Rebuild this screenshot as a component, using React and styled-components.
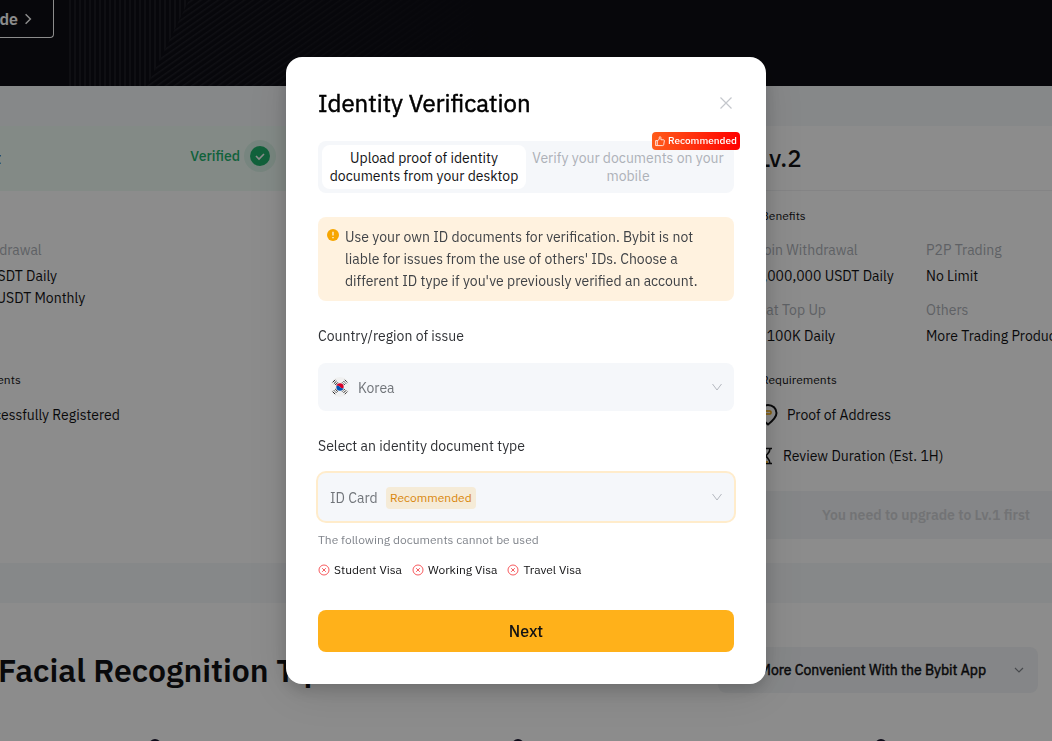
import React, {useState} from 'react';
import styled, {createGlobalStyle} from 'styled-components';

const GlobalStyle = createGlobalStyle`
  * {
    box-sizing: border-box;
  }
  body {
    margin: 0;
    overflow: hidden;
    color: #121214;
    font: 400 14px/22px 'IBM Plex Sans', Roboto, 'Liberation Sans', sans-serif;
  }
  button,
  select {
    font: inherit;
    color: inherit;
    border: 0;
    background: none;
    cursor: pointer;
  }
  p, h1, h2, h3, h4, ul, dl, dd {
    margin: 0;
    padding: 0;
  }
`;

const Page = styled.div`
  height: 100vh;
  overflow: hidden;
  background: white;
`;

const Band = styled.section`
  display: flex;
  justify-content: center;
  padding-right: 16px;
  overflow: hidden;
`;

const Container = styled.div`
  flex: none;
  width: 1200px;
`;

const Hero = styled(Band)`
  position: relative;
  height: 86px;
  background: #0e0e15;
`;

const HeroLines = styled.svg`
  position: absolute;
  top: 0;
  left: 69px;
`;

const GuideButton = styled.button`
  display: flex;
  align-items: center;
  justify-content: flex-end;
  gap: 4px;
  width: 136px;
  height: 38px;
  padding: 0 19px 0 0;
  border: 1px solid white;
  border-top: 0;
  border-radius: 0 0 4px 4px;
  color: white;
  font-size: 16px;
  font-weight: 600;
`;

const LevelsBand = styled(Band)`
  padding-top: 40px;
  padding-bottom: 40px;
  background: #f5f7fa;
`;

const Cards = styled(Container)`
  display: grid;
  grid-template-columns: repeat(3, 1fr);
  gap: 24px;
  position: relative;
  box-shadow: 0 0 0 100vw white;
  clip-path: inset(0 -100vw);
  background: white;
`;

const CardHeader = styled.header`
  display: flex;
  align-items: center;
  justify-content: space-between;
  height: 65px;
  padding: ${props => (props.$verified ? '0 26px 4px 23px' : '0 24px')};
  background: ${props => (props.$verified ? '#effbf5' : 'white')};
  border-bottom: 1px solid ${props => (props.$verified ? '#effbf5' : '#f0f1f3')};
  border-radius: 0 0 8px 0;
  box-shadow: ${props => (props.$verified ? '-384px 0 0 #effbf5' : 'none')};
`;

const Level = styled.h2`
  font-size: 24px;
  font-weight: 500;
`;

const AccountLevel = styled.h2`
  padding-top: 4px;
  font-size: 16px;
  font-weight: 500;
`;

const VerifiedMark = styled.span`
  display: flex;
  align-items: center;
  gap: 4px;
  color: #20b26c;
  font-weight: 500;
`;

const CardBody = styled.div`
  padding: 16px 24px 24px;
`;

const CardCaption = styled.h3`
  padding-left: 3px;
  font-size: 12px;
  font-weight: 400;
  line-height: 18px;
`;

const Benefits = styled.dl`
  display: grid;
  grid-template-columns: 1fr 1fr;
  align-content: start;
  row-gap: 12px;
  min-height: 108px;
  margin: 14px -3px 24px;
  white-space: nowrap;

  dt {
    margin-bottom: 4px;
    color: #adb1b8;
  }
`;

const Requirements = styled.ul`
  display: flex;
  flex-direction: column;
  gap: 19px;
  margin: 15px 0 24px;
  list-style: none;

  li {
    display: flex;
    align-items: center;
    gap: 9px;
  }
`;

const UpgradeButton = styled.button`
  width: 100%;
  height: 48px;
  border-radius: 8px;
  background: #f3f5f7;
  color: #d0d2d6;
  font-weight: 600;
`;

const TipsBand = styled(Band)`
  padding-top: 44px;
`;

const Tips = styled(Container)`
  padding: 0 80px;
`;

const TipsHead = styled.div`
  display: flex;
  align-items: center;
  justify-content: space-between;
`;

const TipsTitle = styled.h2`
  font-size: 32px;
  font-weight: 600;
  line-height: 46px;
`;

const TopicButton = styled.button`
  display: flex;
  align-items: center;
  justify-content: flex-end;
  gap: 28px;
  width: 320px;
  height: 46px;
  padding: 0 14px;
  border-radius: 8px;
  background: #f3f5f7;
  -webkit-text-stroke: 0.5px;
`;

const TipIcons = styled.div`
  display: grid;
  grid-template-columns: repeat(3, 1fr);
  gap: 48px;
  justify-items: center;
  margin-top: 46px;
`;

const Overlay = styled.div`
  position: fixed;
  inset: 0;
  display: flex;
  align-items: center;
  justify-content: center;
  background: rgba(0, 0, 0, 0.45);
`;

const Dialog = styled.div`
  width: 480px;
  max-width: 100%;
  padding: 32px;
  border-radius: 16px;
  background: white;
  box-shadow: 0 6px 16px rgba(0, 0, 0, 0.16), 0 8px 48px rgba(0, 0, 0, 0.12);
`;

const DialogHead = styled.div`
  display: flex;
  align-items: center;
  justify-content: space-between;
  margin-bottom: 24px;
`;

const DialogTitle = styled.h1`
  font-size: 24px;
  font-weight: 400;
  line-height: 28px;
  color: #000;
  -webkit-text-stroke: 0.5px;
`;

const CloseButton = styled.button`
  display: flex;
  padding: 2px;
`;

const Tabs = styled.div`
  position: relative;
  display: grid;
  grid-template-columns: 1fr 1fr;
  padding: 4px;
  border-radius: 8px;
  background: #f5f7fa;
`;

const Tab = styled.button`
  height: 44px;
  padding: 0 4px;
  border-radius: 8px;
  line-height: 18px;
  background: ${props => (props.$active ? 'white' : 'transparent')};
  color: ${props => (props.$active ? '#121214' : '#adb1b8')};
`;

const HotBadge = styled.span`
  position: absolute;
  top: -9px;
  right: -6px;
  display: flex;
  align-items: center;
  gap: 3px;
  height: 18px;
  padding: 0 3px;
  border-radius: 4px;
  background: linear-gradient(90deg, #ff5c1a, #ff0000);
  color: white;
  font-size: 10px;
  font-weight: 500;
`;

const Notice = styled.div`
  display: flex;
  gap: 6px;
  margin-top: 24px;
  padding: 9px;
  border-radius: 8px;
  background: #fff2df;
  color: #404347;

  svg {
    flex: none;
    margin-top: 3px;
  }
`;

const Label = styled.label`
  display: block;
  margin: 24px 0 16px;
  color: #303236;
`;

const SelectBox = styled.div`
  position: relative;
  display: flex;
  align-items: center;
  height: 48px;
  border-radius: 8px;
  background: #f5f7fa;
  box-shadow: ${props => (props.$focused ? '0 0 0 2px #ffeccb' : 'none')};

  > svg {
    position: absolute;
    pointer-events: none;
  }
`;

const Select = styled.select`
  appearance: none;
  width: 100%;
  height: 100%;
  padding: 2px 40px 0 ${props => (props.$withFlag ? '40px' : '12px')};
  outline: none;
  color: #71757a;
`;

const TypeBadge = styled.span`
  position: absolute;
  top: 14px;
  left: 68px;
  padding: 0 4px;
  border-radius: 4px;
  background: #f5ebd7;
  color: #d9860b;
  font-size: 12px;
  pointer-events: none;
`;

const Hint = styled.p`
  margin-top: 10px;
  color: #81858c;
  font-size: 12px;
  line-height: 18px;
`;

const Rejected = styled.ul`
  display: flex;
  gap: 10px;
  margin-top: 12px;
  list-style: none;
  font-size: 12px;
  line-height: 18px;

  li {
    display: flex;
    align-items: center;
    gap: 4px;
  }
`;

const NextButton = styled.button`
  width: 100%;
  height: 42px;
  margin-top: 31px;
  border-radius: 8px;
  background: #ffb11a;
  font-size: 16px;
  font-weight: 500;
`;

const REJECTED_DOCUMENTS = ['Student Visa', 'Working Visa', 'Travel Visa'];

const LEVEL_TWO_BENEFITS = [
  ['Coin Withdrawal', '2,000,000 USDT Daily'],
  ['P2P Trading', 'No Limit'],
  ['Fiat Top Up', '$ 100K Daily'],
  ['Others', 'More Trading Products']
];

const Chevron = ({size = 10, color = '#b4b8bf', ...rest}) => (
  <svg width={size} height={size} viewBox="0 0 10 10" fill="none" stroke={color} {...rest}>
    <path d="M0.5 2 5 8 9.5 2" />
  </svg>
);

const FlatChevron = ({size = 10, color = '#81858c', ...rest}) => (
  <svg width={size} height={size} viewBox="0 0 10 10" fill="none" stroke={color} {...rest}>
    <path d="m1 3 4 4 4-4" strokeWidth="1.200" />
  </svg>
);

const CheckMark = () => (
  <svg width="32" height="32" viewBox="0 0 32 32" fill="none">
    <circle cx="16" cy="16" r="16" fill="#20b26c" opacity="0.1" />
    <circle cx="16" cy="16" r="10" fill="#20b26c" />
    <path d="m12 16 3 3 5-5" stroke="white" strokeWidth="1.6" />
  </svg>
);

const PinIcon = () => (
  <svg width="20" height="22" viewBox="0 0 20 22" fill="none" strokeWidth="2">
    <path d="M10 20.500C5 16.500 1.500 13 1.500 9a8.500 8 0 0 1 17 0c0 4-3.500 7.500-8.500 11.500Z" stroke="#121214" />
    <rect x="6" y="7" width="7" height="3" rx="1" stroke="#f7a600" strokeWidth="1.500" />
  </svg>
);

const HourglassIcon = () => (
  <svg width="16" height="18" viewBox="0 0 16 18" fill="none" strokeWidth="1.6">
    <path d="M0 1.500h14M0 16.500h14M2 1.500c0 4 2.500 5 4 7.500-1.500 2.500-4 3.500-4 7.500M12 1.500c0 4-2.500 5-4 7.500 1.500 2.500 4 3.500 4 7.500" stroke="#121214" />
    <path d="M5 15h5" stroke="#f7a600" />
  </svg>
);

const ThumbIcon = () => (
  <svg width="10" height="11" viewBox="0 0 11 12" fill="none" stroke="white" strokeWidth="0.9" strokeLinejoin="round">
    <path d="M0.700 5h1.800v5.500H0.700zM2.500 5.200 4.700 3.600V1.400C4.700.4 6.500.4 6.500 1.700v2.400h2.800c.7 0 1.100.5 1 1.200l-.7 4.200c-.1.600-.5 1-1.100 1H2.500" />
  </svg>
);

const WarningIcon = () => (
  <svg width="12" height="12" viewBox="0 0 12 12">
    <circle cx="6" cy="6" r="6" fill="#f7a600" />
    <path d="M6 2.800v3.800M6 7.900v1.300" stroke="white" strokeWidth="1.200" />
  </svg>
);

const KoreaFlag = props => (
  <svg width="20" height="20" viewBox="0 0 20 20" {...props}>
    <circle cx="10" cy="10" r="10" fill="#f0f0f0" />
    <path d="M6.300 10a3.700 3.700 0 0 1 7.400 0c0 1.800-2 2-3.700 0s-3.700-1.500-3.700 0Z" fill="#d80027" />
    <path d="M13.700 10a3.700 3.700 0 0 1-7.400 0c0-1.500 2-2 3.700 0s3.700 1.800 3.700 0Z" fill="#0052b4" />
    <g stroke="#111" strokeWidth="0.900">
      <path d="m2.600 5.400 2.600-2.600M3.900 6.700l2.600-2.600M5.200 8l2.600-2.600" />
      <path d="m14.800 2.800 2.600 2.600M13.500 4.100l2.600 2.600M12.200 5.400l2.600 2.600" strokeDasharray="1.500 0.600" />
      <path d="m2.600 14.600 2.600 2.600M5.200 12l2.600 2.600" />
      <path d="m3.900 13.300 2.600 2.600" strokeDasharray="1.500 0.600" />
      <path d="m14.800 17.200 2.600-2.600M12.200 14.600l2.600-2.600" strokeDasharray="1.500 0.600" />
      <path d="m13.500 15.900 2.600-2.600" />
    </g>
  </svg>
);

const RejectIcon = () => (
  <svg width="12" height="12" viewBox="0 0 12 12" fill="none" stroke="#f5484d">
    <circle cx="6" cy="6" r="5" strokeWidth="0.900" />
    <path d="m4.200 4.200 3.600 3.600M7.800 4.200 4.200 7.800" strokeWidth="0.900" />
  </svg>
);

function HeroPattern() {
  return (
    <HeroLines width="420" height="86" viewBox="0 0 420 86" aria-hidden="true">
      <defs>
        <pattern id="upright" width="5" height="10" patternUnits="userSpaceOnUse">
          <rect width="2" height="10" fill="#1c1c24" />
        </pattern>
        <pattern id="slanted" width="5" height="5" patternUnits="userSpaceOnUse" patternTransform="rotate(-35)">
          <rect width="5" height="1.500" fill="#202028" />
        </pattern>
        <linearGradient id="fade">
          <stop offset="0.250" stopColor="white" />
          <stop offset="1" stopColor="black" />
        </linearGradient>
        <mask id="fade-out">
          <rect width="420" height="86" fill="url(#fade)" />
        </mask>
      </defs>
      <path d="M0 0h120L78 86H0z" fill="url(#upright)" />
      <path d="M120 0h300v86H78z" fill="url(#slanted)" mask="url(#fade-out)" />
    </HeroLines>
  );
}

function LevelCards() {
  return (
    <LevelsBand>
      <Cards>
        <article>
          <CardHeader $verified>
            <AccountLevel>Account</AccountLevel>
            <VerifiedMark>
              Verified
              <CheckMark />
            </VerifiedMark>
          </CardHeader>
          <CardBody>
            <CardCaption>Benefits</CardCaption>
            <Benefits>
              <div>
                <dt>Coin Withdrawal</dt>
                <dd>20,000 USDT Daily</dd>
                <dd>100,000 USDT Monthly</dd>
              </div>
            </Benefits>
            <CardCaption>Requirements</CardCaption>
            <Requirements>
              <li>
                <PinIcon />
                Successfully Registered
              </li>
            </Requirements>
          </CardBody>
        </article>
        <article>
          <CardHeader />
        </article>
        <article>
          <CardHeader>
            <Level>Lv.2</Level>
          </CardHeader>
          <CardBody>
            <CardCaption>Benefits</CardCaption>
            <Benefits>
              {LEVEL_TWO_BENEFITS.map(([name, value]) => (
                <div key={name}>
                  <dt>{name}</dt>
                  <dd>{value}</dd>
                </div>
              ))}
            </Benefits>
            <CardCaption>Requirements</CardCaption>
            <Requirements>
              <li>
                <PinIcon />
                Proof of Address
              </li>
              <li>
                <HourglassIcon />
                Review Duration (Est. 1H)
              </li>
            </Requirements>
            <UpgradeButton disabled>You need to upgrade to Lv.1 first</UpgradeButton>
          </CardBody>
        </article>
      </Cards>
    </LevelsBand>
  );
}

function FacialTips() {
  return (
    <TipsBand>
      <Tips>
        <TipsHead>
          <TipsTitle>Facial Recognition Tips</TipsTitle>
          <TopicButton>
            More Convenient With the Bybit App
            <FlatChevron />
          </TopicButton>
        </TipsHead>
        <TipIcons>
          {[0, 1, 2].map(i => (
            <svg key={i} width="12" height="12" viewBox="0 0 12 12">
              <circle cx="6" cy="6" r="5" fill="none" stroke="#1b1730" strokeWidth="2" />
            </svg>
          ))}
        </TipIcons>
      </Tips>
    </TipsBand>
  );
}

function VerificationDialog() {
  const [tab, setTab] = useState('desktop');

  return (
    <Dialog role="dialog" aria-modal="true" aria-labelledby="dialog-title">
      <DialogHead>
        <DialogTitle id="dialog-title">Identity Verification</DialogTitle>
        <CloseButton aria-label="Close">
          <svg width="12" height="12" viewBox="0 0 12 12" stroke="#c4c7cc" strokeWidth="1.200">
            <path d="m0.500 0.500 11 11M11.500 0.500l-11 11" />
          </svg>
        </CloseButton>
      </DialogHead>
      <Tabs role="tablist">
        <Tab role="tab" $active={tab === 'desktop'} onClick={() => setTab('desktop')}>
          Upload proof of identity documents from your desktop
        </Tab>
        <Tab role="tab" $active={tab === 'mobile'} onClick={() => setTab('mobile')}>
          Verify your documents on your mobile
        </Tab>
        <HotBadge>
          <ThumbIcon />
          Recommended
        </HotBadge>
      </Tabs>
      <Notice>
        <WarningIcon />
        <p>
          Use your own ID documents for verification. Bybit is not liable for issues from the use
          of others' IDs. Choose a different ID type if you've previously verified an account.
        </p>
      </Notice>
      <Label htmlFor="country">Country/region of issue</Label>
      <SelectBox>
        <KoreaFlag style={{left: 12}} />
        <Select id="country" $withFlag>
          <option>Korea</option>
        </Select>
        <Chevron style={{right: 12}} />
      </SelectBox>
      <Label htmlFor="document-type">Select an identity document type</Label>
      <SelectBox $focused>
        <Select id="document-type">
          <option>ID Card</option>
        </Select>
        <TypeBadge>Recommended</TypeBadge>
        <Chevron style={{right: 12}} />
      </SelectBox>
      <Hint>The following documents cannot be used</Hint>
      <Rejected>
        {REJECTED_DOCUMENTS.map(name => (
          <li key={name}>
            <RejectIcon />
            {name}
          </li>
        ))}
      </Rejected>
      <NextButton>Next</NextButton>
    </Dialog>
  );
}

export default function App() {
  return (
    <>
      <GlobalStyle />
      <Page>
        <Hero>
          <HeroPattern />
          <Container>
            <GuideButton>
              Guide
              <FlatChevron size={12} color="white" style={{rotate: '-90deg'}} />
            </GuideButton>
          </Container>
        </Hero>
        <LevelCards />
        <FacialTips />
      </Page>
      <Overlay>
        <VerificationDialog />
      </Overlay>
    </>
  );
}
